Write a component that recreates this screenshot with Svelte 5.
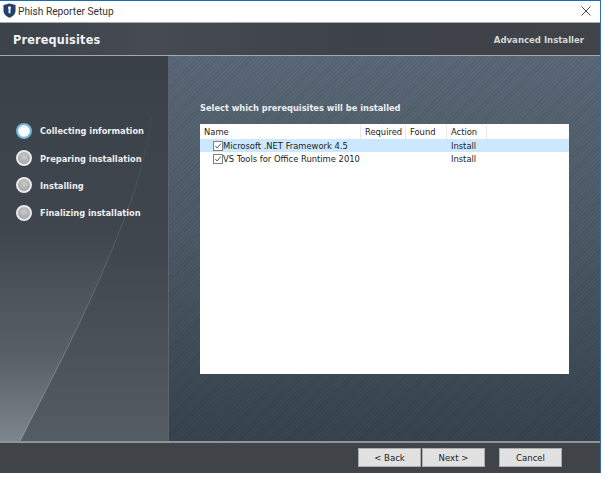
<script>
	const steps = [
		{ name: 'Collecting information', active: true },
		{ name: 'Preparing installation' },
		{ name: 'Installing' },
		{ name: 'Finalizing installation' }
	];
	const columns = [
		{ name: 'Name', width: 161 },
		{ name: 'Required', width: 45 },
		{ name: 'Found', width: 41 },
		{ name: 'Action', width: 40 }
	];
	const rows = [
		{ name: 'Microsoft .NET Framework 4.5', action: 'Install', selected: true },
		{ name: 'VS Tools for Office Runtime 2010', action: 'Install' }
	];
</script>

<div class="window">
	<div class="titlebar">
		<svg class="logo" viewBox="0 0 14 16" width="13" height="15">
			<path d="M7 0.5 L13.5 2 V8 C13.5 12 10.5 14.5 7 15.7 C3.5 14.5 0.5 12 0.5 8 V2 Z" fill="#23406b" />
			<path d="M7 3.5 a1.6 1.6 0 0 1 1 2.8 V11 H6 V6.3 A1.6 1.6 0 0 1 7 3.5 Z" fill="#fff" />
		</svg>
		<span class="title">Phish Reporter Setup</span>
		<svg class="close" viewBox="0 0 10 10" width="10" height="10">
			<path d="M0.5 0.5 L9.5 9.5 M9.5 0.5 L0.5 9.5" stroke="#333" stroke-width="0.9" fill="none" />
		</svg>
	</div>

	<header class="banner">
		<h1>Prerequisites</h1>
		<span class="brand">Advanced Installer</span>
	</header>

	<div class="main">
		<aside class="side">
			<svg class="swoosh" viewBox="0 0 168 385" preserveAspectRatio="none">
				<defs>
					<linearGradient id="wedge" x1="0" y1="0" x2="0" y2="1">
						<stop offset="0.35" stop-color="#565e65" stop-opacity="0" />
						<stop offset="0.72" stop-color="#5a6268" stop-opacity="0.8" />
						<stop offset="1" stop-color="#7c868c" />
					</linearGradient>
					<linearGradient id="edge" x1="0" y1="1" x2="0" y2="0">
						<stop offset="0" stop-color="#9aa3a8" stop-opacity="0.8" />
						<stop offset="0.6" stop-color="#6d767d" stop-opacity="0.5" />
						<stop offset="1" stop-color="#6d767d" stop-opacity="0.1" />
					</linearGradient>
				</defs>
				<path d="M0 385 V60 H152 C142 125 122 170 100 222 C75 280 45 335 20 385 Z" fill="url(#wedge)" />
				<path d="M20 385 C45 335 75 280 100 222 C122 170 142 125 152 60" stroke="url(#edge)" stroke-width="1" fill="none" />
			</svg>
			<ul class="steps">
				{#each steps as step}
					<li class="step">
						<span class="dot" class:active={step.active}></span>
						<span>{step.name}</span>
					</li>
				{/each}
			</ul>
		</aside>

		<section class="content">
			<p class="heading">Select which prerequisites will be installed</p>
			<div class="list">
				<div class="head">
					{#each columns as col}
						<span class="col" style="width: {col.width}px">{col.name}</span>
					{/each}
				</div>
				{#each rows as row}
					<div class="row" class:selected={row.selected}>
						<span class="check">
							<svg viewBox="0 0 9 9" width="8" height="8">
								<path d="M1.5 4.5 L3.6 6.8 L7.6 1.8" stroke="#444" stroke-width="1" fill="none" />
							</svg>
						</span>
						<span class="name">{row.name}</span>
						<span class="action">{row.action}</span>
					</div>
				{/each}
			</div>
		</section>
	</div>

	<footer class="buttons">
		<button>&lt; Back</button>
		<button>Next &gt;</button>
		<button class="cancel">Cancel</button>
	</footer>
</div>

<style>
	:global(body) {
		margin: 0;
		background: #fff;
	}
	.window {
		width: 601px;
		height: 473px;
		box-sizing: border-box;
		display: flex;
		flex-direction: column;
		border-top: 1px solid #1a6bb0;
		border-right: 1px solid #2f6ea6;
		overflow: hidden;
		font-family: "DejaVu Sans Condensed", "DejaVu Sans", sans-serif;
		font-stretch: condensed;
	}
	.titlebar {
		height: 21px;
		display: flex;
		align-items: center;
		background: #fff;
		padding-left: 3px;
		border-bottom: 1px solid #a9abad;
		flex: none;
	}
	.logo {
		margin-right: 2px;
		margin-top: -2px;
	}
	.title {
		font: 10.2px Roboto, sans-serif;
		color: #333;
	}
	.close {
		margin-left: auto;
		margin-right: 9px;
		margin-top: -1px;
	}
	.banner {
		height: 32px;
		flex: none;
		display: flex;
		align-items: center;
		justify-content: space-between;
		padding: 0 16px 0 13px;
		background: linear-gradient(90deg, #3c4249, #454b51 25%, #3d4248 60%, #404449);
		border-bottom: 1px solid #a5a8aa;
		color: #f0f1f2;
	}
	h1 {
		margin: 0;
		font-size: 12.5px;
		font-weight: 700;
		letter-spacing: 0.2px;
	}
	.brand {
		font-size: 9.5px;
		font-weight: 700;
		color: #d5d8da;
	}
	.main {
		height: 385px;
		flex: none;
		display: flex;
		border-bottom: 2px solid #8e9498;
	}
	.side {
		width: 169px;
		box-sizing: border-box;
		flex: none;
		position: relative;
		background: linear-gradient(180deg, #3a4149 0%, #3f464d 50%, #555d64 100%);
		border-right: 1px solid #5b646c;
	}
	.swoosh {
		position: absolute;
		inset: 0;
		width: 100%;
		height: 100%;
	}
	.steps {
		position: relative;
		list-style: none;
		margin: 0;
		padding: 67px 0 0 16px;
		display: flex;
		flex-direction: column;
		gap: 12px;
	}
	.step {
		display: flex;
		align-items: center;
		gap: 8px;
		height: 15.4px;
		font-size: 9.2px;
		font-weight: 700;
		color: #eceeef;
	}
	.dot {
		width: 16px;
		height: 16px;
		box-sizing: border-box;
		border-radius: 50%;
		border: 2px solid #e8e9ea;
		background: radial-gradient(circle at 50% 40%, #c9cacb, #98999b);
	}
	.dot.active {
		border-color: #72b4dc;
		background: radial-gradient(circle at 50% 50%, #fff 40%, #c4e6f8);
	}
	.content {
		flex: 1;
		padding: 46px 0 0 31px;
		background-color: #56636f;
		background-image:
			repeating-linear-gradient(135deg, rgba(0, 0, 0, 0.07) 0 1px, transparent 1px 3px),
			linear-gradient(180deg, #5a6877 0%, #4d5a67 45%, #37434e 100%);
	}
	.heading {
		margin: 0 0 10px;
		font-size: 9.2px;
		font-weight: 700;
		line-height: 12px;
		color: #eceeef;
	}
	.list {
		width: 369px;
		height: 250px;
		background: #fff;
		box-sizing: border-box;
		font-size: 9.3px;
		color: #222;
		padding-top: 1px;
	}
	.head {
		display: flex;
		height: 14px;
		line-height: 14px;
	}
	.col {
		box-sizing: border-box;
		padding-left: 4px;
		border-right: 1px solid #e8e8e8;
	}
	.row {
		display: flex;
		align-items: center;
		height: 13px;
		padding-left: 13px;
	}
	.row.selected {
		background: #cce8ff;
	}
	.check {
		width: 10px;
		height: 10px;
		box-sizing: border-box;
		border: 1px solid #808080;
		background: #fff;
		display: flex;
		flex: none;
	}
	.name {
		width: 228px;
		white-space: nowrap;
	}
	.buttons {
		flex: 1;
		display: flex;
		align-items: center;
		justify-content: flex-end;
		padding: 0 38px 2px 0;
		background: #404448;
	}
	button {
		width: 63px;
		height: 19px;
		margin-left: 1px;
		padding: 0;
		border: 1px solid #adadad;
		background: #e1e1e1;
		color: #222;
		font-family: inherit;
		font-stretch: inherit;
		font-size: 9.5px;
	}
	.cancel {
		margin-left: 14px;
	}
</style>
